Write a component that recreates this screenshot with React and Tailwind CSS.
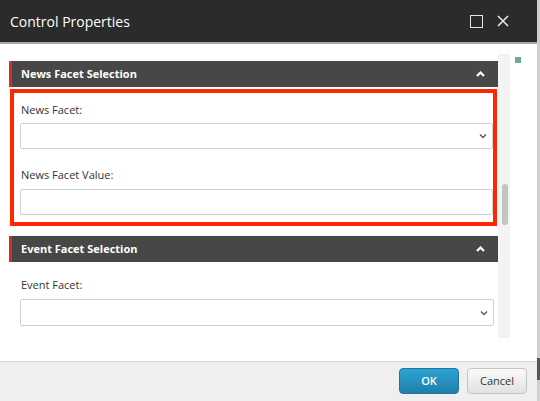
import React from 'react';

const Chevron = () => (
  <svg width="8" height="6" viewBox="0 0 8 6" className="shrink-0">
    <path d="M1 1.5 L4 4.5 L7 1.5" fill="none" stroke="#555" strokeWidth="1.3" />
  </svg>
);

const SectionHeader = ({ title }) => (
  <div className="h-[26px] flex items-center justify-between bg-[#474747] border-l-[3px] border-[#d0302b] pl-[9px] pr-[13px]">
    <span className="text-[11px] font-bold text-white">{title}</span>
    <svg width="9" height="6" viewBox="0 0 9 6">
      <path d="M1 5 L4.5 1.5 L8 5" fill="none" stroke="#fff" strokeWidth="2.2" />
    </svg>
  </div>
);

const Field = ({ h = 'h-[26px]', select }) => (
  <div className={`${h} border border-[#cfcfcf] rounded-[2px] bg-white flex items-center justify-end pr-[5px]`}>
    {select && <Chevron />}
  </div>
);

export default function App() {
  return (
    <div
      className="w-[540px] h-[401px] flex bg-white overflow-hidden"
      style={{ fontFamily: '"Open Sans", "Noto Sans", sans-serif' }}
    >
      <div className="w-[537px] h-full flex flex-col">
        {/* Title bar */}
        <div className="h-[44px] shrink-0 bg-[#2b2b2b] border-b-2 border-[#a9a9a9] flex items-center justify-between pl-[10px] pr-[28px]">
          <span className="text-[14px] text-white">Control Properties</span>
          <div className="flex items-center gap-[14px]">
            <div className="w-[13px] h-[13px] border-[1.5px] border-[#e6e6e6]" />
            <svg width="12" height="12" viewBox="0 0 12 12">
              <path d="M1 1 L11 11 M11 1 L1 11" stroke="#e6e6e6" strokeWidth="1.6" />
            </svg>
          </div>
        </div>

        {/* Body */}
        <div className="flex-1 flex pt-[10px]">
          <div className="w-[498px] h-[284px] pl-[9px] overflow-hidden">
            <div className="pt-[7px]">
              <SectionHeader title="News Facet Selection" />
              <div className="mt-[2px] ml-[1px] w-[487px] border-4 border-[#ff2600] pt-[10px] pb-[7px] pl-[6px]">
                <div className="text-[11px] leading-[14px] text-[#333] pl-[1px]">News Facet:</div>
                <div className="mt-[6px]">
                  <Field select />
                </div>
                <div className="mt-[19px] text-[11px] leading-[14px] text-[#333] pl-[1px]">News Facet Value:</div>
                <div className="mt-[7px]">
                  <Field />
                </div>
              </div>
              <div className="mt-[10px]">
                <SectionHeader title="Event Facet Selection" />
              </div>
              <div className="pl-[11px] pr-[4px]">
                <div className="mt-[16px] text-[11px] leading-[14px] text-[#333] pl-[1px]">Event Facet:</div>
                <div className="mt-[7px]">
                  <Field h="h-[27px]" select />
                </div>
              </div>
            </div>
          </div>
          {/* Scrollbar */}
          <div className="w-[12px] h-[284px] bg-[#f4f4f4] pt-[130px] pl-[4px]">
            <div className="w-[6px] h-[41px] rounded-full bg-[#c4c4c4]" />
          </div>
          <div className="pl-[5px] pt-[3px]">
            <div className="w-[6px] h-[6px] bg-[#6fa899]" />
          </div>
        </div>

        {/* Footer */}
        <div className="h-[40px] shrink-0 bg-[#efefef] border-t border-[#d6d6d6] flex items-start justify-end gap-[8px] pt-[6px] pr-[10px]">
          <button className="w-[60px] h-[26px] rounded-[4px] bg-gradient-to-b from-[#2ea3d3] to-[#1f7fab] border border-[#1b76a0] text-white text-[11px] font-semibold">
            OK
          </button>
          <button className="w-[60px] h-[26px] rounded-[4px] bg-gradient-to-b from-[#fafafa] to-[#e2e2e2] border border-[#c4c4c4] text-[#333] text-[11px]">
            Cancel
          </button>
        </div>
      </div>
      <div className="w-[3px] h-full flex flex-col bg-[#cfcfcf]">
        <div className="flex-1" />
        <div className="h-[22px] bg-[#555]" />
        <div className="h-[21px]" />
      </div>
    </div>
  );
}
